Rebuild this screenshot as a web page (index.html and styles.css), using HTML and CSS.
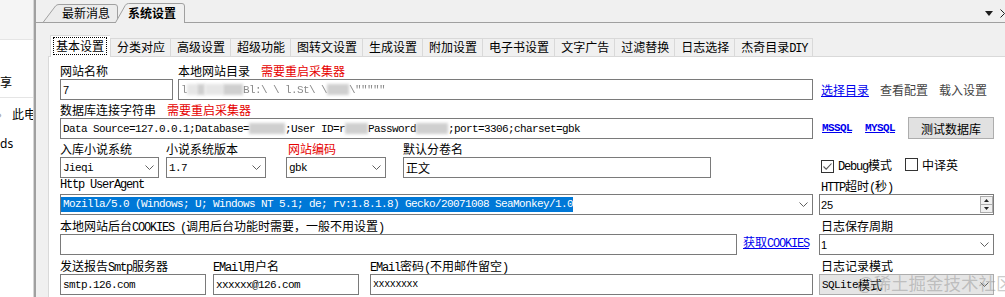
FILE: index.html
```html
<!DOCTYPE html>
<html lang="zh-CN">
<head>
    <meta charset="UTF-8">
    <meta name="viewport" content="width=device-width, initial-scale=1.0">
    <title>系统设置</title>
    <link rel="stylesheet" href="styles.css">
</head>
<body>
<!-- window behind -->
<div class="explorer">
    <div class="explorer-ribbon"></div>
    <div class="explorer-share"><span>共享</span></div>
    <div class="explorer-path"><span class="crumb">›</span>此电脑</div>
    <div class="explorer-item">ds</div>
</div>

<div class="app">
    <!-- document tabs -->
    <div class="doc-tabs">
        <svg class="doc-tabs-bg" width="969" height="23" viewBox="0 0 969 23">
            <path d="M7 22.5 L19.5 6 Q20.8 4.5 23 4.5 H79 Q81.5 4.5 81.5 7 V22.5" fill="#ececec" stroke="#a0a0a0"/>
            <path d="M0 22.5 H969" stroke="#a0a0a0" fill="none"/>
            <path d="M79 23.5 L89.2 5.5 Q90.3 3.5 92.5 3.5 H146 Q148.5 3.5 148.5 6 V23.5" fill="#f0f0f0" stroke="#a0a0a0"/>
        </svg>
        <span class="doc-tab">最新消息</span>
        <span class="doc-tab active">系统设置</span>
        <div class="doc-menu">
            <svg width="8" height="5" viewBox="0 0 8 5"><path d="M0 0H8L4 5Z" fill="#1e1e1e"/></svg>
            <svg width="5" height="9" viewBox="0 0 5 9"><path d="M0.5 0.5L4.5 4.5L0.5 8.5" stroke="#1e1e1e" fill="none"/></svg>
        </div>
    </div>

    <div class="tabctl">
        <div class="tabs">
            <span class="tab active"><span class="focus">基本设置</span></span>
            <span class="tab">分类对应</span>
            <span class="tab">高级设置</span>
            <span class="tab">超级功能</span>
            <span class="tab">图转文设置</span>
            <span class="tab">生成设置</span>
            <span class="tab">附加设置</span>
            <span class="tab">电子书设置</span>
            <span class="tab">文字广告</span>
            <span class="tab">过滤替换</span>
            <span class="tab">日志选择</span>
            <span class="tab last">杰奇目录<span class="lat">DIY</span></span>
        </div>

        <div class="panel">
            <div class="form">
                <!-- row 1 -->
                <div class="cell">
                    <div class="field f-name">
                        <label>网站名称</label>
                        <div class="box sans">7</div>
                    </div>
                    <div class="field f-dir">
                        <label>本地网站目录<span class="warn">需要重启采集器</span></label>
                        <div class="box">
                            <span class="ghost">l</span><span class="blur pale w10"></span><span class="blur w8"></span><span class="blur pale w18"></span><span class="blur w20"></span><span class="ghost">Bl:\ \ l.St\ \</span><span class="blur w22"></span><span class="ghost">\"""""</span>
                        </div>
                    </div>
                </div>
                <div class="cell">
                    <div class="links">
                        <a href="#" class="link">选择目录</a>
                        <a href="#" class="plain">查看配置</a>
                        <a href="#" class="plain">载入设置</a>
                    </div>
                </div>

                <!-- row 2 -->
                <div class="cell">
                    <div class="field f-full">
                        <label>数据库连接字符串<span class="warn">需要重启采集器</span></label>
                        <div class="box">Data Source=127.0.0.1;Database=<span class="blur w36"></span>;User ID=r<span class="blur w23"></span>Password<span class="blur w32"></span>;port=3306;charset=gbk</div>
                    </div>
                </div>
                <div class="cell">
                    <div class="db-tools">
                        <a href="#" class="link mono-link">MSSQL</a>
                        <a href="#" class="link mono-link">MYSQL</a>
                        <button class="btn">测试数据库</button>
                    </div>
                </div>

                <!-- row 3 -->
                <div class="cell">
                    <div class="field f-sys">
                        <label>入库小说系统</label>
                        <div class="box select">Jieqi<svg class="chev" width="9" height="5" viewBox="0 0 9 5"><path d="M0.5 0.5L4.5 4.5L8.5 0.5" fill="none" stroke="#606060"/></svg></div>
                    </div>
                    <div class="field f-ver">
                        <label>小说系统版本</label>
                        <div class="box select">1.7<svg class="chev" width="9" height="5" viewBox="0 0 9 5"><path d="M0.5 0.5L4.5 4.5L8.5 0.5" fill="none" stroke="#606060"/></svg></div>
                    </div>
                    <div class="field f-enc">
                        <label class="warn-label">网站编码</label>
                        <div class="box select">gbk<svg class="chev" width="9" height="5" viewBox="0 0 9 5"><path d="M0.5 0.5L4.5 4.5L8.5 0.5" fill="none" stroke="#606060"/></svg></div>
                    </div>
                    <div class="field f-vol">
                        <label>默认分卷名</label>
                        <div class="box"><span class="cjk">正文</span></div>
                    </div>
                </div>
                <div class="cell">
                    <div class="checks">
                        <span class="check">
                            <span class="tick"><svg width="11" height="11" viewBox="0 0 11 11"><path d="M1.5 5.5L4.2 8.2L9.5 2.5" fill="none" stroke="#555" stroke-width="1.1"/></svg></span>
                            <span><span class="lat">Debug</span>模式</span>
                        </span>
                        <span class="check">
                            <span class="tick"></span>
                            <span>中译英</span>
                        </span>
                    </div>
                </div>

                <!-- row 4 -->
                <div class="cell">
                    <div class="field f-full">
                        <label class="lat">Http UserAgent</label>
                        <div class="box select ua"><span class="sel">Mozilla/5.0 (Windows; U; Windows NT 5.1; de; rv:1.8.1.8) Gecko/20071008 SeaMonkey/1.0</span><svg class="chev" width="9" height="5" viewBox="0 0 9 5"><path d="M0.5 0.5L4.5 4.5L8.5 0.5" fill="none" stroke="#606060"/></svg></div>
                    </div>
                </div>
                <div class="cell">
                    <div class="field f-side">
                        <label><span class="lat">HTTP</span>超时<span class="lat">(</span>秒<span class="lat">)</span></label>
                        <div class="box sans num">25
                            <span class="spin">
                                <svg width="13" height="17" viewBox="0 0 13 17">
                                    <rect x="0.5" y="0.5" width="12" height="16" fill="#f0f0f0" stroke="#acacac"/>
                                    <path d="M0.5 8.5H12.5" stroke="#acacac"/>
                                    <path d="M4 6L6.5 3L9 6Z" fill="#222"/>
                                    <path d="M4 11L6.5 14L9 11Z" fill="#222"/>
                                </svg>
                            </span>
                        </div>
                    </div>
                </div>

                <!-- row 5 -->
                <div class="cell">
                    <div class="field f-cookie">
                        <label>本地网站后台<span class="lat">COOKIES (</span>调用后台功能时需要，一般不用设置<span class="lat">)</span></label>
                        <div class="box"></div>
                    </div>
                    <a href="#" class="link get-cookie">获取<span class="lat">COOKIES</span></a>
                </div>
                <div class="cell">
                    <div class="field f-side">
                        <label>日志保存周期</label>
                        <div class="box select sans num">1<svg class="chev" width="9" height="5" viewBox="0 0 9 5"><path d="M0.5 0.5L4.5 4.5L8.5 0.5" fill="none" stroke="#606060"/></svg></div>
                    </div>
                </div>

                <!-- row 6 -->
                <div class="cell">
                    <div class="field f-smtp">
                        <label>发送报告<span class="lat">Smtp</span>服务器</label>
                        <div class="box">smtp.126.com</div>
                    </div>
                    <div class="field f-user">
                        <label><span class="lat">EMail</span>用户名</label>
                        <div class="box">xxxxxx@126.com</div>
                    </div>
                    <div class="field f-pass">
                        <label><span class="lat">EMail</span>密码<span class="lat">(</span>不用邮件留空<span class="lat">)</span></label>
                        <div class="box small">xxxxxxxx</div>
                    </div>
                </div>
                <div class="cell">
                    <div class="field f-side">
                        <label>日志记录模式</label>
                        <div class="box select dropbtn">SQLite<span class="cjk">模式</span><svg class="chev" width="9" height="5" viewBox="0 0 9 5"><path d="M0.5 0.5L4.5 4.5L8.5 0.5" fill="none" stroke="#606060"/></svg></div>
                    </div>
                </div>
            </div>
        </div>
    </div>

    <div class="watermark">@稀土掘金技术社区</div>
</div>
</body>
</html>
```

FILE: styles.css
```css
* {
    margin: 0;
    padding: 0;
    box-sizing: border-box;
}

body {
    display: flex;
    width: 1005px;
    height: 297px;
    overflow: hidden;
    background-color: #fff;
    font-family: "Noto Sans CJK SC", "Noto Sans", sans-serif;
    font-size: 12px;
    color: #000;
}

a {
    color: inherit;
    text-decoration: none;
}

.lat {
    font-family: "Liberation Mono", monospace;
    font-size: 12px;
    letter-spacing: -1.2px;
}

.cjk {
    font-family: "Noto Sans CJK SC", sans-serif;
    font-size: 12px;
    letter-spacing: 0;
}

/* Explorer window behind */
.explorer {
    width: 34px;
    flex: none;
    overflow: hidden;
    white-space: nowrap;
    background-color: #fff;
    border-right: 1px solid #d6d6d6;
}

.explorer-ribbon {
    height: 40px;
    background-color: #f5f5f5;
    border-bottom: 1px solid #e5e5e5;
}

.explorer-share {
    height: 58px;
    padding-top: 34px;
    line-height: 16px;
    border-bottom: 1px solid #e5e5e5;
}

.explorer-share span {
    margin-left: -12px;
}

.explorer-path {
    padding-top: 8px;
    line-height: 16px;
}

.crumb {
    display: inline-block;
    width: 14px;
    margin-left: -2px;
    color: #999;
}

.explorer-item {
    margin-top: 14px;
    line-height: 16px;
    font-family: "Noto Sans", sans-serif;
}

/* Main window */
.app {
    flex: 1;
    position: relative;
    overflow: hidden;
    background-color: #f0f0f0;
    border-left: 2px solid #a0a0a0;
}

.doc-tabs {
    position: relative;
    display: flex;
    align-items: flex-start;
    height: 23px;
    padding: 4px 0 0 26px;
}

.doc-tabs-bg {
    position: absolute;
    top: 0;
    left: 0;
}

.doc-tab {
    position: relative;
    line-height: 18px;
    white-space: nowrap;
}

.doc-tab:first-of-type {
    margin-right: 18px;
}

.doc-tab.active {
    font-weight: bold;
}

.doc-menu {
    position: relative;
    display: flex;
    align-items: center;
    gap: 7px;
    height: 18px;
    margin-left: auto;
}

/* Inner tab control */
.tabctl {
    padding: 12px 0 0 12px;
}

.tabs {
    position: relative;
    z-index: 1;
    display: flex;
    align-items: flex-end;
    height: 21px;
    margin-left: 2px;
}

.tab {
    height: 18px;
    line-height: 16px;
    padding: 0 5px 0 6px;
    border-top: 1px solid #d9d9d9;
    border-left: 1px solid #d9d9d9;
    background-color: #f0f0f0;
    white-space: nowrap;
}

.tab.last {
    border-right: 1px solid #d9d9d9;
}

.tab.active {
    height: 22px;
    margin-bottom: -1px;
    padding: 1px 6px 0 5px;
    line-height: 17px;
    background-color: #fff;
}

.focus {
    display: inline-block;
    line-height: 16px;
    padding: 0 2px;
    margin: 0 -2px;
    outline: 1px dotted #000;
}

.panel {
    height: 260px;
    padding: 4px 0 0 11px;
    background-color: #fff;
    border-top: 1px solid #d9d9d9;
    border-left: 1px solid #d9d9d9;
}

/* Form layout */
.form {
    display: grid;
    grid-template-columns: 753px 175px;
    grid-template-rows: 39px 39px 39px 37px 40px 40px;
    column-gap: 6px;
    align-items: end;
}

.cell {
    display: flex;
    align-items: flex-end;
}

.field {
    display: flex;
    flex-direction: column;
}

.field label {
    height: 15px;
    line-height: 15px;
    margin-bottom: 1px;
    white-space: nowrap;
}

.warn {
    margin-left: 11px;
    color: #e60000;
}

.warn-label {
    padding-left: 2px;
    color: #e60000;
}

.f-name { width: 113px; }
.f-dir { width: 635px; margin-left: 5px; }
.f-full { width: 753px; }
.f-sys { width: 99px; }
.f-ver { width: 100px; margin-left: 7px; }
.f-enc { width: 100px; margin-left: 20px; }
.f-vol { width: 308px; margin-left: 17px; }
.f-cookie { width: 677px; }
.f-smtp { width: 146px; }
.f-user { width: 146px; margin-left: 7px; }
.f-pass { width: 443px; margin-left: 11px; }

.f-side {
    width: 175px;
}

.f-side label {
    padding-left: 2px;
}

.box {
    display: flex;
    align-items: center;
    height: 21px;
    padding-left: 2px;
    border: 1px solid #7a7a7a;
    background-color: #fff;
    font-family: "Liberation Mono", "Noto Sans CJK SC", monospace;
    font-size: 11px;
    letter-spacing: -0.6px;
    white-space: nowrap;
    overflow: hidden;
}

.box.sans {
    font-family: "Liberation Sans", sans-serif;
    letter-spacing: 0;
}

.box.num {
    padding-left: 1px;
}

.box.small {
    font-size: 10px;
    letter-spacing: -0.4px;
}

.chev {
    flex: none;
    margin-left: auto;
    margin-right: 4px;
}

.ua {
    padding-left: 0;
}

.sel {
    padding-left: 2px;
    line-height: 15px;
    background-color: #0078d7;
    color: #fff;
}

.spin {
    display: flex;
    margin-left: auto;
}

.dropbtn {
    background-color: #e5e5e5;
    border-color: #adadad;
}

/* blurred private values */
.blur {
    display: inline-block;
    height: 11px;
    background-color: #cfcfcf;
    filter: blur(1.5px);
}

.blur.pale {
    background-color: #e6e6e6;
}

.w8 { width: 8px; }
.w10 { width: 10px; }
.w18 { width: 18px; }
.w20 { width: 20px; }
.w22 { width: 22px; }
.w23 { width: 23px; }
.w32 { width: 32px; }
.w36 { width: 36px; }

.ghost {
    color: #8a8a8a;
    filter: blur(0.5px);
}

/* side column */
.links {
    display: flex;
    align-items: center;
    gap: 11px;
    height: 21px;
    padding-left: 2px;
}

.link {
    color: #0000ee;
    text-decoration: underline;
}

.plain {
    color: #444;
}

.db-tools {
    display: flex;
    align-items: center;
    height: 22px;
    padding-left: 3px;
}

.mono-link {
    margin-right: 13px;
    font-family: "Liberation Mono", monospace;
    font-size: 11px;
    font-weight: bold;
    letter-spacing: -0.6px;
}

.btn {
    width: 86px;
    height: 22px;
    border: 1px solid #adadad;
    background-color: #e1e1e1;
    font-family: "Noto Sans CJK SC", sans-serif;
    font-size: 12px;
    color: #000;
}

.get-cookie {
    margin-left: 6px;
    line-height: 21px;
}

.checks {
    display: flex;
    align-items: flex-start;
    gap: 13px;
    height: 21px;
    padding: 1px 0 0 2px;
}

.check {
    display: flex;
    align-items: center;
    gap: 4px;
    line-height: 13px;
    white-space: nowrap;
}

.tick {
    display: flex;
    align-items: center;
    justify-content: center;
    width: 13px;
    height: 13px;
    border: 1px solid #333;
    background-color: #fff;
}

.watermark {
    position: absolute;
    left: 821px;
    top: 273px;
    font-size: 17.5px;
    line-height: 20px;
    white-space: nowrap;
    color: rgba(140, 140, 140, 0.45);
}
```
